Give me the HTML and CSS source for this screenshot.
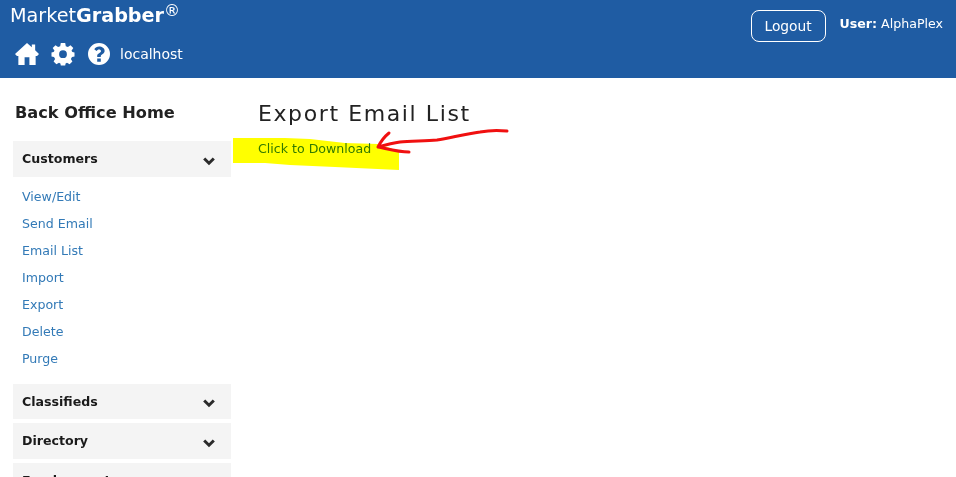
FILE: index.html
```html
<!DOCTYPE html>
<html lang="en">

<head>
    <meta charset="UTF-8">
    <title>Export Email List</title>
    <link rel="stylesheet" href="styles.css">
</head>

<body>
    <div class="topBar">
        <div class="brandBox">
            <div class="brand">Market<b>Grabber</b><sup>®</sup></div>
            <div class="iconRow">
                <svg class="topIcon" width="24" height="24" viewBox="0 0 25 24"><path d="M12.5 .5 L17.5 5 V2 H21 V8.2 L25 12 L23 14 H21.5 V23.5 H15 V15.5 H10 V23.5 H3.5 V14 H2 L0 12 Z" fill="#fff"/></svg>
                <svg class="topIcon" width="24" height="24" viewBox="0 0 24 24"><path fill-rule="evenodd" d="M9.8 1 H14.2 L14.8 4.2 L16.9 5.1 L19.5 3.3 L22.3 6.1 L20.5 8.7 L21.4 10.1 L23.5 10.6 V14.4 L21 14.9 L19.9 17 L21.4 19.5 L18.6 22.3 L16 20.7 L14.6 21.4 L14.2 23.5 H9.8 L9.4 21.4 L8 20.7 L5.4 22.3 L2.6 19.5 L4.1 17 L3 14.9 L.5 14.4 V10.6 L2.6 10.1 L3.5 8.7 L1.7 6.1 L4.5 3.3 L7.1 5.1 L9.2 4.2 Z M12 8.3 A3.9 3.9 0 1 0 12 16.1 A3.9 3.9 0 1 0 12 8.3 Z" fill="#fff"/></svg>
                <svg class="topIcon" width="24" height="24" viewBox="0 0 24 24"><path fill-rule="evenodd" d="M12 1 A11 11 0 1 0 12 23 A11 11 0 1 0 12 1 Z M10.2 16.4 H13.8 V19.8 H10.2 Z M13.8 15 H10.2 V13.4 C10.2 11.4 14 10.8 14 8.9 C14 8 13.1 7.4 12 7.4 C10.9 7.4 10.2 8 9.5 8.9 L7.3 7.2 C8.4 5.5 10 4.6 12.2 4.6 C15 4.6 17.6 6.3 17.6 8.9 C17.6 12 13.8 12.2 13.8 14 Z" fill="#fff"/></svg>
                <span class="hostName">localhost</span>
            </div>
        </div>
        <div class="userBox">
            <a class="logoutBtn" href="#">Logout</a>
            <span class="userName"><b>User:</b> AlphaPlex</span>
        </div>
    </div>

    <div class="mainBox">
        <div class="sideBar">
            <h2 class="sideTitle">Back Office Home</h2>

            <div class="sideHead">
                <span>Customers</span>
                <svg class="chevron" width="12" height="9" viewBox="0 0 12 9"><path d="M1.2 1.5 L6 6.2 L10.8 1.5" fill="none" stroke="#2b2b2b" stroke-width="3"/></svg>
            </div>
            <ul class="sideList">
                <li><a href="#">View/Edit</a></li>
                <li><a href="#">Send Email</a></li>
                <li><a href="#">Email List</a></li>
                <li><a href="#">Import</a></li>
                <li><a href="#">Export</a></li>
                <li><a href="#">Delete</a></li>
                <li><a href="#">Purge</a></li>
            </ul>

            <div class="sideHead short">
                <span>Classifieds</span>
                <svg class="chevron" width="12" height="9" viewBox="0 0 12 9"><path d="M1.2 1.5 L6 6.2 L10.8 1.5" fill="none" stroke="#2b2b2b" stroke-width="3"/></svg>
            </div>
            <div class="sideHead">
                <span>Directory</span>
                <svg class="chevron" width="12" height="9" viewBox="0 0 12 9"><path d="M1.2 1.5 L6 6.2 L10.8 1.5" fill="none" stroke="#2b2b2b" stroke-width="3"/></svg>
            </div>
            <div class="sideHead">
                <span>Employment</span>
            </div>
        </div>

        <div class="content">
            <h1 class="pageTitle">Export Email List</h1>
            <a class="downloadLink" href="#">Click to Download</a>
        </div>
    </div>

    <!-- marker scribbled over the screenshot -->
    <svg class="scribble" width="956" height="477" viewBox="0 0 956 477">
        <path class="marker" d="M233 138 L285 138 L310 139 L345 143 L378 144 L399 151 L399 170 L335 167 L290 165 L265 163 L233 163 Z"/>
        <path class="arrow" d="M507 131 C498 130 490 130 480 132 C465 134 450 138 437 140 C425 141 410 141 400 142 C392 143 385 145 378 147 C388 149 398 152 409 152 M378 147 C381 141 384 137 389 133"/>
    </svg>
</body>

</html>
```

FILE: styles.css
```css
* {
    margin: 0;
    padding: 0;
    list-style-type: none;
    box-sizing: border-box;
}

html,
body {
    width: 100%;
    height: 100%;
    overflow: hidden;
}

body {
    position: relative;
    font-family: "DejaVu Sans", Verdana, sans-serif;
    font-size: 12.6px;
    color: #222;
    background-color: #fff;
}

a {
    text-decoration: none;
}

.topBar {
    height: 78px;
    display: flex;
    justify-content: space-between;
    background-color: #1f5ca3;
    color: #fff;
}

.brandBox {
    padding: 3px 0 0 10px;
}

.brand {
    height: 39px;
    font-size: 19.2px;
    line-height: 26px;
}

.brand sup {
    font-size: 16px;
    line-height: 0;
    vertical-align: 6px;
}

.iconRow {
    display: flex;
    align-items: center;
    gap: 12px;
    padding-left: 5px;
}

.hostName {
    font-size: 14px;
    margin-left: -3px;
}

.userBox {
    display: flex;
    align-items: flex-start;
    gap: 14px;
    padding: 10px 13px 0 0;
}

.logoutBtn {
    width: 75px;
    height: 32px;
    border: 1px solid #fff;
    border-radius: 8px;
    color: #fff;
    font-size: 13.8px;
    line-height: 30px;
    text-align: center;
}

.userName {
    padding-top: 6px;
}

.mainBox {
    display: flex;
}

.sideBar {
    width: 218px;
    margin-left: 13px;
    flex-shrink: 0;
}

.sideTitle {
    padding: 25px 0 0 2px;
    height: 63px;
    font-size: 16.2px;
    line-height: 20px;
    font-weight: bold;
}

.sideHead {
    height: 36px;
    margin-bottom: 4px;
    padding: 0 16px 0 9px;
    display: flex;
    justify-content: space-between;
    align-items: center;
    background-color: #f4f4f4;
    color: #1a1a1a;
    font-weight: bold;
}

.sideHead span {
    margin-bottom: 1px;
}

.sideHead.short {
    height: 35px;
}

.chevron {
    margin-top: 4px;
}

.sideList {
    padding: 2px 0 12px 9px;
}

.sideList li {
    height: 27px;
    line-height: 27px;
}

.sideList a {
    color: #337ab7;
}

.content {
    padding: 21px 0 0 27px;
}

.pageTitle {
    font-size: 22px;
    font-weight: normal;
    letter-spacing: 1.6px;
    line-height: 30px;
}

.downloadLink {
    display: block;
    margin-top: 12px;
    color: #337ab7;
}

.scribble {
    position: absolute;
    left: 0;
    top: 0;
    pointer-events: none;
}

.marker {
    fill: #ffff00;
    mix-blend-mode: multiply;
}

.arrow {
    fill: none;
    stroke: #f01010;
    stroke-width: 3;
    stroke-linecap: round;
    stroke-linejoin: round;
}
```
